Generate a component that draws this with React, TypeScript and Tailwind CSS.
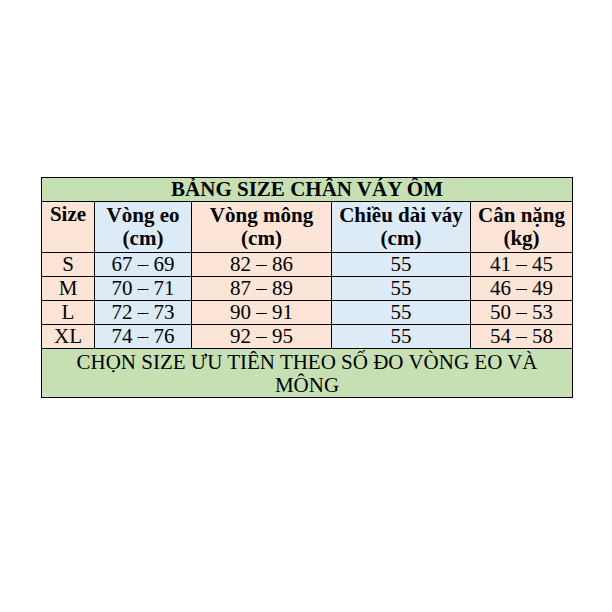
import React from "react"

const rows = [
  { size: "S", waist: "67 – 69", hip: "82 – 86", length: "55", weight: "41 – 45" },
  { size: "M", waist: "70 – 71", hip: "87 – 89", length: "55", weight: "46 – 49" },
  { size: "L", waist: "72 – 73", hip: "90 – 91", length: "55", weight: "50 – 53" },
  { size: "XL", waist: "74 – 76", hip: "92 – 95", length: "55", weight: "54 – 58" },
]

const peach = "bg-[#fce4d6]"
const blue = "bg-[#ddebf7]"
const cell = "border border-black p-0 text-center align-middle"

export default function App() {
  return (
    <div className="w-[612px] h-[612px] bg-white pt-[177px] pl-[41px] text-black font-['Liberation_Serif','Times_New_Roman',serif]">
      <table className="border-collapse w-[531px] table-fixed text-[21px] leading-[23px]">
        <colgroup>
          <col className="w-[53px]" />
          <col className="w-[97px]" />
          <col className="w-[140px]" />
          <col className="w-[139px]" />
          <col className="w-[102px]" />
        </colgroup>
        <tbody>
          {/* tiêu đề */}
          <tr>
            <td colSpan={5} className={`${cell} h-[24px] bg-[#c6e0b4] font-bold`}>
              BẢNG SIZE CHÂN VÁY ÔM
            </td>
          </tr>
          <tr className="font-bold">
            <td className={`${cell} ${peach} h-[51px] align-top pt-[1px]`}>Size</td>
            <td className={`${cell} ${blue}`}>
              Vòng eo
              <br />
              (cm)
            </td>
            <td className={`${cell} ${peach}`}>
              Vòng mông
              <br />
              (cm)
            </td>
            <td className={`${cell} ${blue}`}>
              Chiều dài váy
              <br />
              (cm)
            </td>
            <td className={`${cell} ${peach}`}>
              Cân nặng
              <br />
              (kg)
            </td>
          </tr>
          {rows.map((r) => (
            <tr key={r.size}>
              <td className={`${cell} ${peach} h-[22px]`}>{r.size}</td>
              <td className={`${cell} ${blue}`}>{r.waist}</td>
              <td className={`${cell} ${peach}`}>{r.hip}</td>
              <td className={`${cell} ${blue}`}>{r.length}</td>
              <td className={`${cell} ${peach}`}>{r.weight}</td>
            </tr>
          ))}
          {/* ghi chú */}
          <tr>
            <td colSpan={5} className={`${cell} h-[48px] bg-[#c6e0b4] align-top pt-[2px]`}>
              CHỌN SIZE ƯU TIÊN THEO SỐ ĐO VÒNG EO VÀ
              <br />
              MÔNG
            </td>
          </tr>
        </tbody>
      </table>
    </div>
  )
}
